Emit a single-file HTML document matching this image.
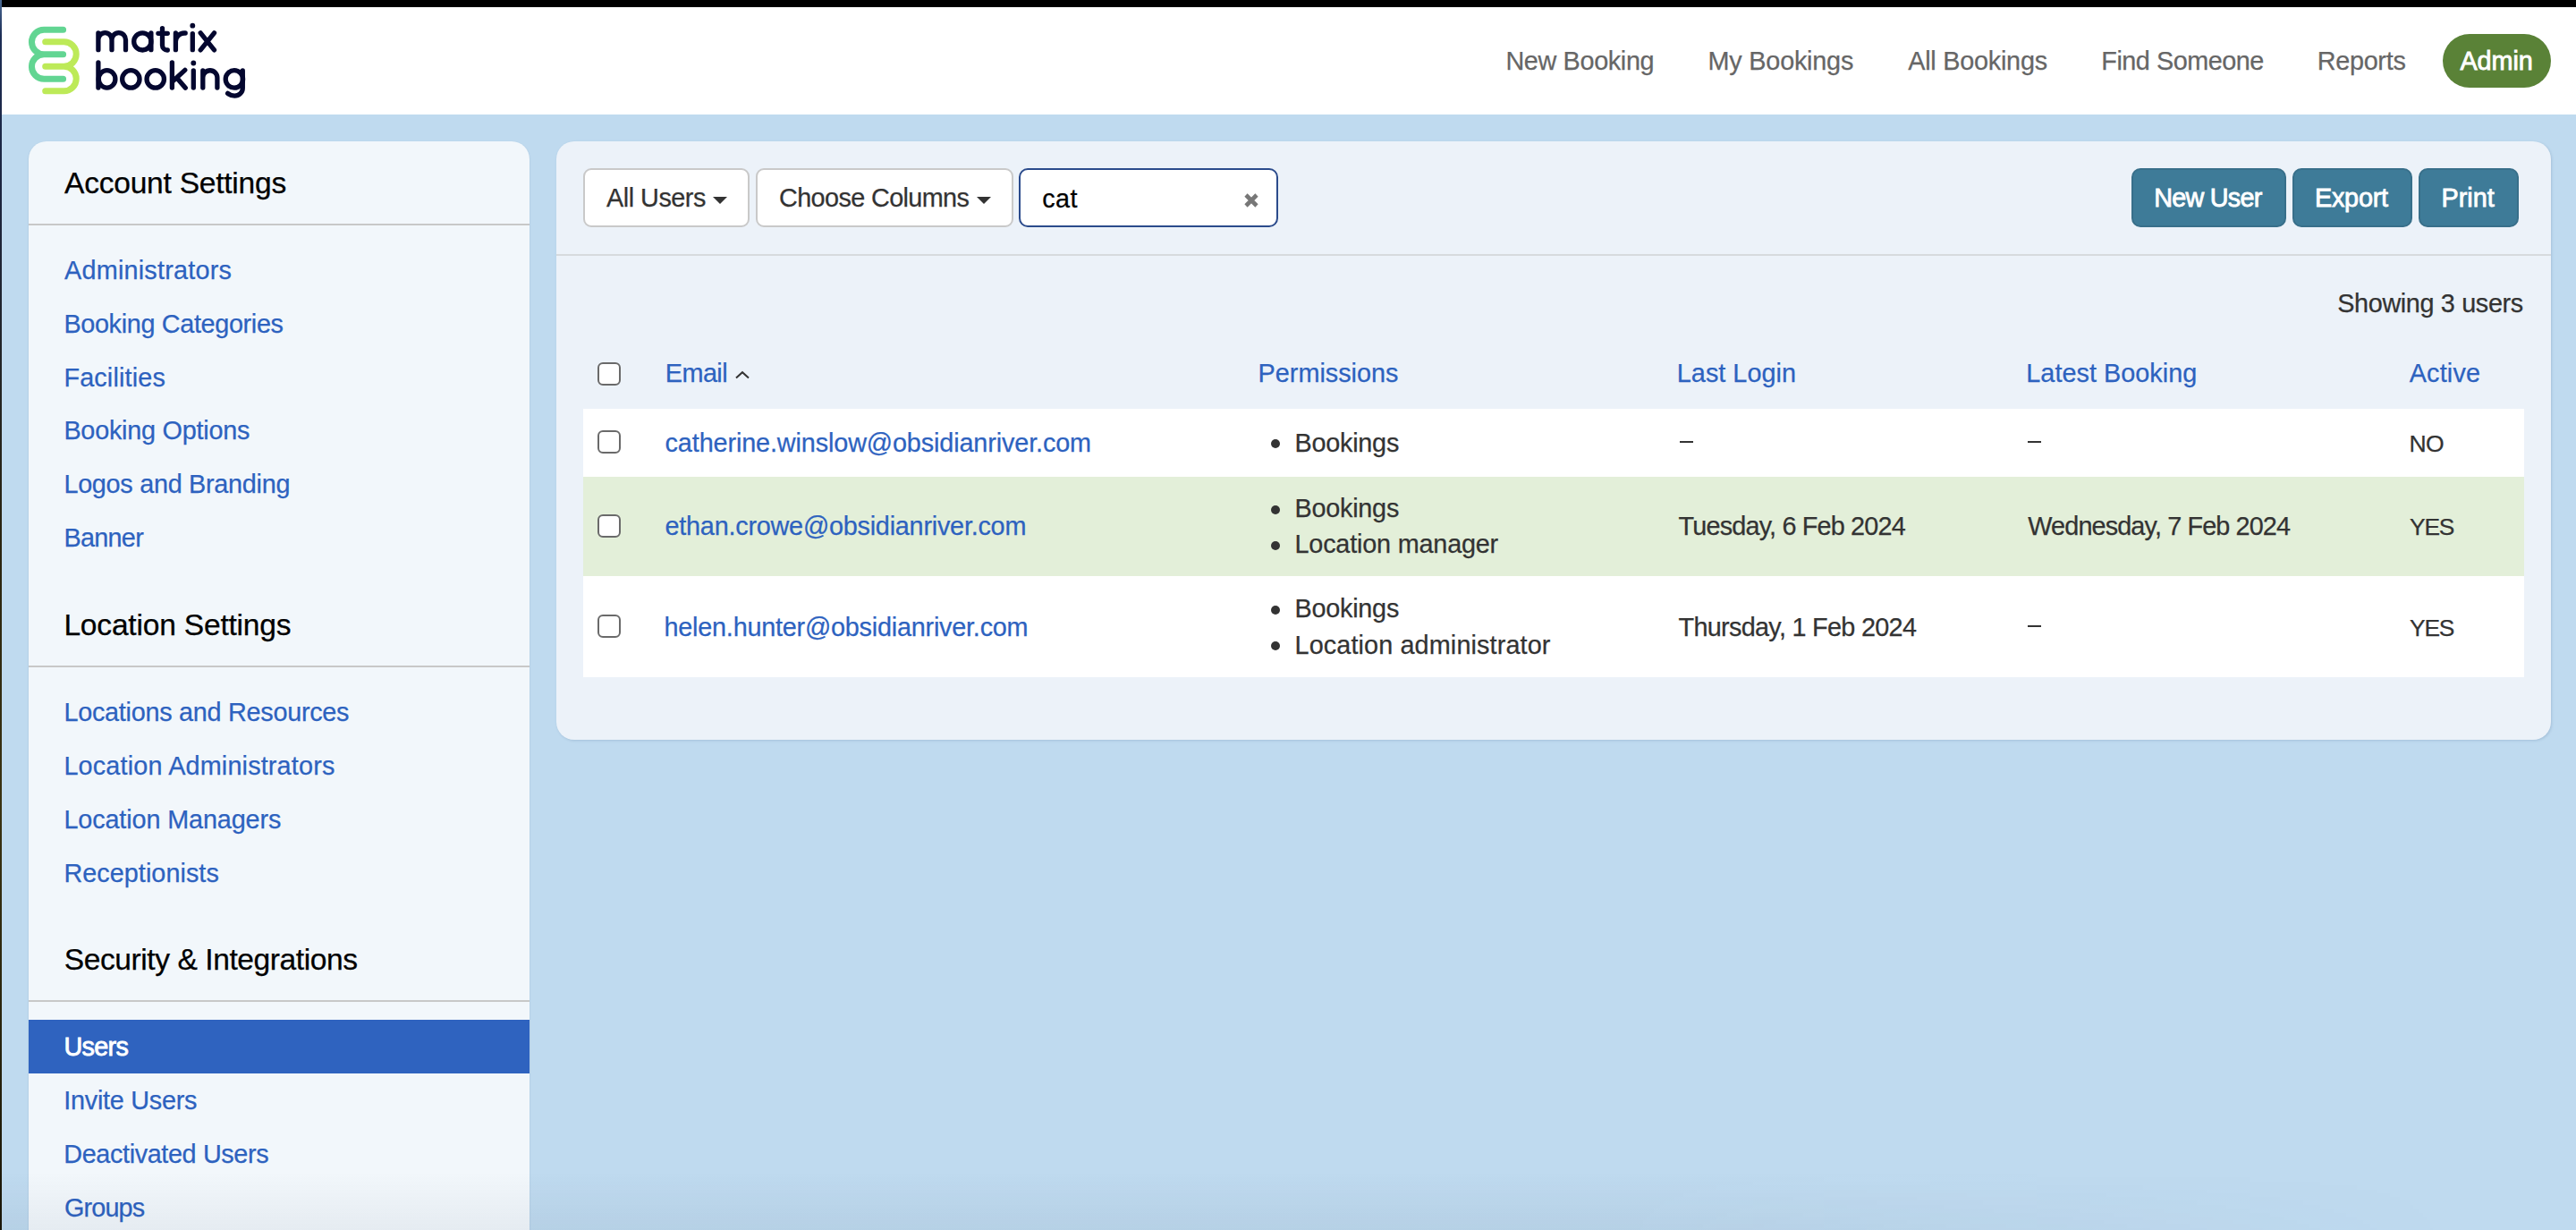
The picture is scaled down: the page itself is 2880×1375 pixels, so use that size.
<!DOCTYPE html>
<html><head><meta charset="utf-8">
<style>
*{box-sizing:border-box;margin:0;padding:0}
html,body{width:2880px;height:1375px;overflow:hidden;background:#bfdaef;font-family:"Liberation Sans",sans-serif}
.a{position:absolute}
.t{position:absolute;white-space:nowrap;line-height:1;-webkit-text-stroke:0.25px currentColor}
.nav{font-size:28.8px;color:#666}
.sh{font-size:33.6px;color:#000}
.sl{font-size:28.8px;color:#2d62bf}
.bt{font-size:28.8px;color:#333}
.wt{font-size:28.8px;color:#fff}
.tx{font-size:28.8px;color:#333}
.hd{font-size:28.8px;color:#2d62bf}
.lk{font-size:28.8px;color:#2d62bf}
.cat{font-size:28.8px;color:#000}
.wt{-webkit-text-stroke:0.8px #fff}
#topbar{left:0;top:0;width:2880px;height:8px;background:#000}
#lstrip{left:0;top:0;width:2px;height:1375px;background:linear-gradient(#4a6a94 0,#1c2d55 40px,#1c2540 200px,#2a2410 600px,#3a3312 900px,#1a1608 1375px)}
#header{left:2px;top:8px;width:2878px;height:120px;background:#fff}
#admin{left:2731px;top:38px;width:121px;height:60px;border-radius:30px;background:#5a8237}
#side{left:32px;top:158px;width:560px;height:1300px;background:#f2f7fb;border-radius:20px 20px 0 0;box-shadow:0 1px 2px rgba(80,110,140,.25)}
.div{height:2px;background:#c8c8c8}
#main{left:622px;top:158px;width:2230px;height:669px;background:#ecf2f9;border-radius:20px;box-shadow:1px 1px 3px rgba(70,100,140,.22)}
.btn{position:absolute;top:188px;height:66px;border:2px solid #c9c9c9;border-radius:9px;background:#fff}
.pbtn{position:absolute;top:188px;height:66px;border:2px solid #386f8a;border-radius:10px;background:#3e7b98}
.caret{position:absolute;width:0;height:0;border-left:8px solid transparent;border-right:8px solid transparent;border-top:8px solid #333}
.cb{position:absolute;width:26px;height:26px;border:2.2px solid #6a6a6a;border-radius:6px;background:#fff}
.bul{position:absolute;width:10px;height:10px;border-radius:50%;background:#333}
.dash{position:absolute;width:15px;height:2px;background:#333}
</style></head><body>
<div id="topbar" class="a"></div>
<div id="header" class="a"></div>
<div id="lstrip" class="a"></div>

<svg class="a" style="left:0;top:0" width="300" height="128" viewBox="0 0 300 128">
  <g fill="none" stroke-linecap="round" stroke-width="7">
    <path stroke="#62d592" d="M70.6,33.3 H49.2 A13.75,13.75 0 0 0 49.2,60.8 H70.6 M49.2,60.8 A13.75,13.75 0 0 0 49.2,88.3 H70.6"/>
    <path stroke="#bdea58" d="M50.7,46.7 H71.5 A13.75,13.75 0 0 1 71.5,74.2 H50.7 M71.5,74.2 A13.75,13.75 0 0 1 71.5,101.7 H50.7"/>
  </g>
  <g fill="none" stroke="#04072f" stroke-width="5.3" stroke-linecap="round" stroke-linejoin="round">
    <path d="M109.9,37 V55.7 M109.9,44.6 A7.55,8 0 0 1 125,44.6 V55.7 M125,44.6 A7.75,8 0 0 1 140.5,44.6 V55.7"/>
    <circle cx="159.3" cy="46.4" r="9.6"/>
    <path d="M168.9,37 V55.7"/>
    <path d="M181.5,31.7 V50.5 A5.5,5.5 0 0 0 187,56 H187.3 M176.9,37.3 H187.3"/>
    <path d="M196.4,37 V55.7 M196.4,46.5 A9.5,9.5 0 0 1 205.9,37 H207.2"/>
    <path d="M215.3,37.7 V55.7"/>
    <path d="M224.2,36.9 L239.5,55.9 M239.5,36.9 L224.2,55.9"/>
    <path d="M109.9,69.9 V98.1"/>
    <ellipse cx="119.6" cy="88.4" rx="9.3" ry="9.75"/>
    <circle cx="146.35" cy="88.4" r="9.7"/>
    <circle cx="173.75" cy="88.4" r="9.7"/>
    <path d="M192.4,69.9 V98.1 M193.5,90.5 L206.8,78.4 M198.3,87.8 L207.3,98.2"/>
    <path d="M216.3,79 V98.1"/>
    <path d="M226.8,79 V98.1 M226.8,86.8 A8.05,8.05 0 0 1 242.9,86.8 V98.1"/>
    <circle cx="261.9" cy="88.4" r="9.7"/>
    <path d="M271.3,79 V98.5 A9,8.7 0 0 1 262.3,107.2 Q258.3,107.2 254.6,104.3"/>
  </g>
  <g fill="#04072f"><circle cx="215.3" cy="28.7" r="2.9"/><circle cx="216.3" cy="70.5" r="2.9"/></g>
</svg>

<div id="admin" class="a"></div>
<div id="side" class="a"></div>
<div class="a div" style="left:32px;top:250px;width:560px"></div>
<div class="a div" style="left:32px;top:744px;width:560px"></div>
<div class="a div" style="left:32px;top:1118px;width:560px"></div>
<div class="a" style="left:32px;top:1140px;width:560px;height:60px;background:#2f63bf"></div>

<div id="main" class="a"></div>
<div class="btn" style="left:652px;width:186px"></div>
<div class="caret" style="left:797px;top:220px"></div>
<div class="btn" style="left:845px;width:288px"></div>
<div class="caret" style="left:1092px;top:220px"></div>
<div class="btn" style="left:1139px;width:290px;border-color:#2b4b8c;border-radius:10px"></div>
<svg class="a" style="left:1390px;top:215px" width="18" height="18" viewBox="0 0 18 18"><path d="M3,3 L15,15 M15,3 L3,15" stroke="#777" stroke-width="4.6"/></svg>
<div class="pbtn" style="left:2383px;width:173px"></div>
<div class="pbtn" style="left:2563px;width:134px"></div>
<div class="pbtn" style="left:2704px;width:112px"></div>
<div class="a" style="left:622px;top:284px;width:2230px;height:2px;background:#d6dadd"></div>

<div class="cb" style="left:668px;top:405px"></div>
<svg class="a" style="left:821px;top:414px" width="18" height="11" viewBox="0 0 18 11"><path d="M2,8.6 L9,2.2 L16,8.6" fill="none" stroke="#333" stroke-width="2"/></svg>

<div class="a" style="left:652px;top:457px;width:2170px;height:300px;background:#fff"></div>
<div class="a" style="left:652px;top:533px;width:2170px;height:111px;background:#e3efd9"></div>
<div class="cb" style="left:668px;top:481px"></div>
<div class="cb" style="left:668px;top:575px"></div>
<div class="cb" style="left:668px;top:687px"></div>
<div class="bul" style="left:1421px;top:491px"></div>
<div class="bul" style="left:1421px;top:565px"></div>
<div class="bul" style="left:1421px;top:605px"></div>
<div class="bul" style="left:1421px;top:677px"></div>
<div class="bul" style="left:1421px;top:717px"></div>
<div class="dash" style="left:1878px;top:493px"></div>
<div class="dash" style="left:2267px;top:493px"></div>
<div class="dash" style="left:2267px;top:699px"></div>

<div class="t nav" style="left:1683.40px;top:53.70px;letter-spacing:-0.346px">New Booking</div>
<div class="t nav" style="left:1909.60px;top:53.70px;letter-spacing:-0.215px">My Bookings</div>
<div class="t nav" style="left:2133.20px;top:53.70px;letter-spacing:-0.234px">All Bookings</div>
<div class="t nav" style="left:2349.30px;top:53.70px;letter-spacing:-0.480px">Find Someone</div>
<div class="t nav" style="left:2590.70px;top:53.70px;letter-spacing:-0.289px">Reports</div>
<div class="t wt" style="left:2750.50px;top:53.60px;letter-spacing:-0.102px">Admin</div>
<div class="t sh" style="left:72.05px;top:187.90px;letter-spacing:-0.256px">Account Settings</div>
<div class="t sl" style="left:72.06px;top:287.60px;letter-spacing:0.216px">Administrators</div>
<div class="t sl" style="left:71.40px;top:347.50px;letter-spacing:-0.337px">Booking Categories</div>
<div class="t sl" style="left:71.40px;top:407.50px;letter-spacing:0.154px">Facilities</div>
<div class="t sl" style="left:71.40px;top:467.40px;letter-spacing:-0.236px">Booking Options</div>
<div class="t sl" style="left:71.40px;top:527.20px;letter-spacing:-0.280px">Logos and Branding</div>
<div class="t sl" style="left:71.40px;top:587.10px;letter-spacing:-0.694px">Banner</div>
<div class="t sh" style="left:71.40px;top:681.90px;letter-spacing:-0.214px">Location Settings</div>
<div class="t sl" style="left:71.40px;top:781.80px;letter-spacing:-0.267px">Locations and Resources</div>
<div class="t sl" style="left:71.40px;top:841.70px;letter-spacing:0.163px">Location Administrators</div>
<div class="t sl" style="left:71.40px;top:901.60px;letter-spacing:-0.121px">Location Managers</div>
<div class="t sl" style="left:71.40px;top:961.60px;letter-spacing:0.044px">Receptionists</div>
<div class="t sh" style="left:71.70px;top:1055.80px;letter-spacing:-0.433px">Security &amp; Integrations</div>
<div class="t wt" style="left:71.40px;top:1155.80px;letter-spacing:-0.675px">Users</div>
<div class="t sl" style="left:71.30px;top:1216.10px;letter-spacing:-0.266px">Invite Users</div>
<div class="t sl" style="left:71.30px;top:1275.90px;letter-spacing:-0.373px">Deactivated Users</div>
<div class="t sl" style="left:72.00px;top:1335.60px;letter-spacing:-0.867px">Groups</div>
<div class="t bt" style="left:678.10px;top:206.50px;letter-spacing:-0.500px">All Users</div>
<div class="t bt" style="left:871.00px;top:206.50px;letter-spacing:-0.614px">Choose Columns</div>
<div class="t cat" style="left:1165.20px;top:207.60px;letter-spacing:0.443px">cat</div>
<div class="t wt" style="left:2408.20px;top:206.80px;letter-spacing:-0.746px">New User</div>
<div class="t wt" style="left:2588.00px;top:206.80px;letter-spacing:-0.245px">Export</div>
<div class="t wt" style="left:2729.60px;top:206.80px;letter-spacing:-0.015px">Print</div>
<div class="t tx" style="left:2613.20px;top:324.50px;letter-spacing:-0.350px">Showing 3 users</div>
<div class="t hd" style="left:743.80px;top:403.20px;letter-spacing:-0.552px">Email</div>
<div class="t hd" style="left:1406.60px;top:403.40px;letter-spacing:-0.002px">Permissions</div>
<div class="t hd" style="left:1874.80px;top:403.40px;letter-spacing:0.025px">Last Login</div>
<div class="t hd" style="left:2265.30px;top:403.40px;letter-spacing:0.039px">Latest Booking</div>
<div class="t hd" style="left:2693.70px;top:403.40px;letter-spacing:0.179px">Active</div>
<div class="t lk" style="left:743.60px;top:480.80px;letter-spacing:-0.121px">catherine.winslow@obsidianriver.com</div>
<div class="t tx" style="left:1447.50px;top:480.60px;letter-spacing:-0.238px">Bookings</div>
<div class="t tx" style="left:2693.40px;top:482.93px;font-size:26.54px;letter-spacing:-0.560px">NO</div>
<div class="t lk" style="left:743.50px;top:574.40px;letter-spacing:-0.225px">ethan.crowe@obsidianriver.com</div>
<div class="t tx" style="left:1447.50px;top:554.20px;letter-spacing:-0.238px">Bookings</div>
<div class="t tx" style="left:1447.50px;top:594.40px;letter-spacing:-0.189px">Location manager</div>
<div class="t tx" style="left:1876.60px;top:574.20px;letter-spacing:-0.824px">Tuesday, 6 Feb 2024</div>
<div class="t tx" style="left:2267.30px;top:574.20px;letter-spacing:-0.870px">Wednesday, 7 Feb 2024</div>
<div class="t tx" style="left:2694.10px;top:576.43px;font-size:26.34px;letter-spacing:-1.261px">YES</div>
<div class="t lk" style="left:742.50px;top:686.50px;letter-spacing:-0.218px">helen.hunter@obsidianriver.com</div>
<div class="t tx" style="left:1447.50px;top:666.40px;letter-spacing:-0.238px">Bookings</div>
<div class="t tx" style="left:1447.50px;top:706.50px;letter-spacing:0.123px">Location administrator</div>
<div class="t tx" style="left:1876.60px;top:686.60px;letter-spacing:-0.699px">Thursday, 1 Feb 2024</div>
<div class="t tx" style="left:2694.10px;top:688.83px;font-size:26.34px;letter-spacing:-1.261px">YES</div>
<div class="a" style="left:2px;top:1310px;width:2878px;height:65px;background:linear-gradient(rgba(40,60,90,0),rgba(40,60,90,0.06));-webkit-mask-image:linear-gradient(to right,#000 0,#000 1800px,transparent 2750px)"></div>
</body></html>
